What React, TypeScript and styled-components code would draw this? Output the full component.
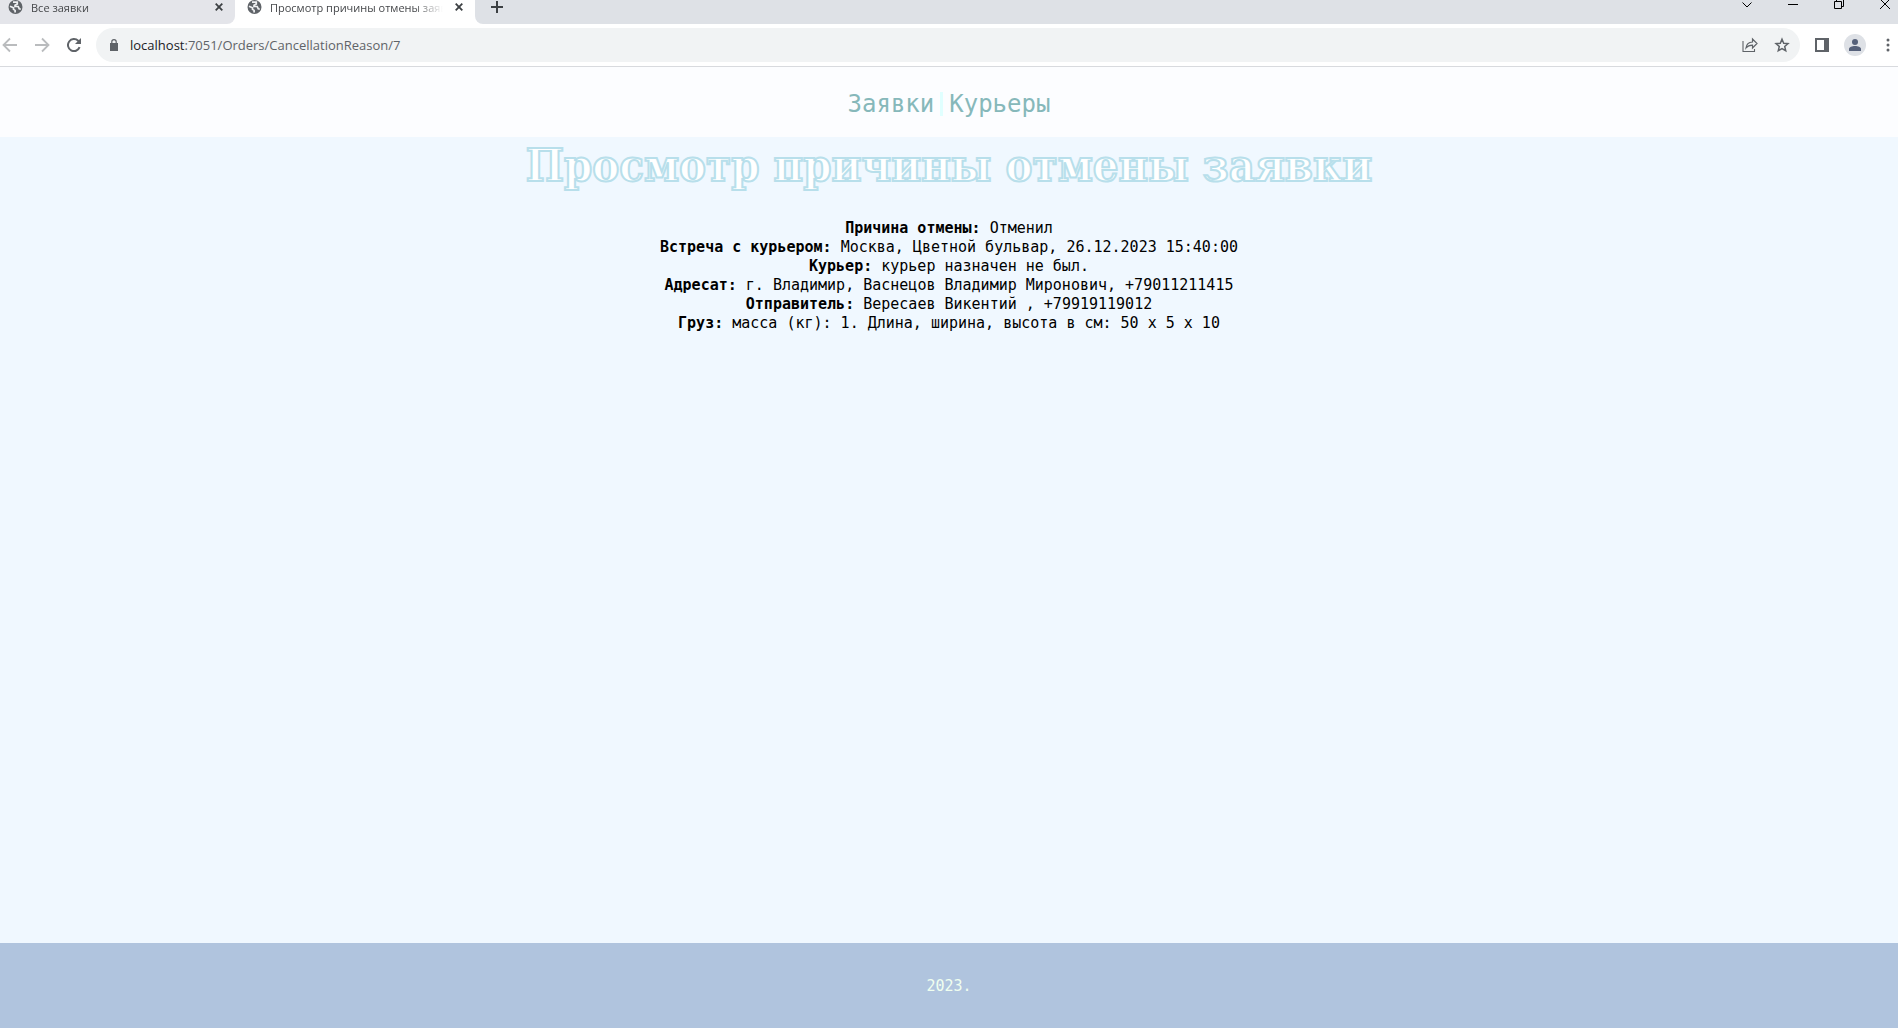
import React from "react";
import styled, { createGlobalStyle, css } from "styled-components";

const GlobalStyle = createGlobalStyle`
  *, *::before, *::after { box-sizing: border-box; }
  body {
    margin: 0;
    background: #f0f8ff;
  }
`;

const ui = `"Open Sans", "Noto Sans", sans-serif`;
const mono = `"DejaVu Sans Mono", "Liberation Mono", monospace`;

const Shell = styled.div`
  display: flex;
  flex-direction: column;
  min-height: 100vh;
`;

const resetButton = css`
  display: inline-flex;
  align-items: center;
  justify-content: center;
  flex: none;
  margin: 0;
  padding: 0;
  border: 0;
  background: none;
`;

const TabStrip = styled.div`
  display: flex;
  height: 24px;
  background: #ffffff;
`;

const Tab = styled.div<{ $active?: boolean }>`
  display: flex;
  align-items: flex-start;
  flex: none;
  width: ${(p) => (p.$active ? 240 : 235)}px;
  padding: 0 8px 0 ${(p) => (p.$active ? 12 : 8)}px;
  border-radius: 0 0 8px 0;
  background: ${(p) => (p.$active ? "#ffffff" : "#e4e5ea")};
`;

const TabTitle = styled.span`
  flex: 1;
  overflow: hidden;
  padding-left: 8px;
  color: #45474a;
  font: 11px/15px ${ui};
  white-space: nowrap;
  mask-image: linear-gradient(to right, #000 84%, transparent);
`;

const TabButton = styled.button`
  ${resetButton}
  width: 16px;
  height: 14px;
  margin-left: 8px;
  color: #3c4043;
`;

const NewTab = styled.div`
  display: flex;
  flex: 1;
  padding-left: 7px;
  border-radius: 0 0 0 8px;
  background: #dee1e6;
`;

const NewTabButton = styled.button`
  ${resetButton}
  width: 30px;
  height: 14px;
  color: #3c4043;
`;

const WindowButtons = styled.div`
  display: flex;
  margin-left: auto;
`;

const WindowButton = styled.button`
  ${resetButton}
  width: 46px;
  height: 9px;
  color: #000000;

  &:last-child {
    justify-content: flex-end;
    width: 36px;
    padding-right: 8px;
  }
`;

const Toolbar = styled.div`
  display: flex;
  align-items: center;
  height: 43px;
  border-bottom: 1px solid #d8dade;
  background: #ffffff;
`;

const NavButtons = styled.div`
  display: flex;
  gap: 12px;
  padding: 0 12px 0 0;
`;

const ToolButton = styled.button<{ $faded?: boolean }>`
  ${resetButton}
  width: 20px;
  height: 24px;
  color: ${(p) => (p.$faded ? "#babcbe" : "#5f6368")};
`;

const AddressBar = styled.form`
  display: flex;
  flex: 1;
  align-items: center;
  gap: 10px;
  height: 34px;
  padding: 0 8px 0 12px;
  border-radius: 17px;
  background: #f1f3f4;
`;

const Address = styled.a`
  flex: 1;
  color: #5f6368;
  font: 13px/20px ${ui};
  text-decoration: none;
`;

const Host = styled.span`
  color: #202124;
`;

const ToolGroup = styled.div`
  display: flex;
  align-items: center;
  gap: 12px;
  padding-left: 12px;
`;

const Profile = styled.button`
  ${resetButton}
  width: 22px;
  height: 22px;
  border-radius: 50%;
  background: #dee1e6;
  color: #56617a;
`;

const SiteHeader = styled.header`
  display: flex;
  align-items: center;
  justify-content: center;
  height: 70px;
  padding-top: 4px;
  background: #fcfdff;
`;

const SiteNav = styled.nav`
  display: flex;
  align-items: center;
`;

const NavLink = styled.a`
  padding: 0 6px;
  color: #86b8ba;
  font: 24px/24px ${mono};
  text-decoration: none;

  & + & { border-left: 3px solid #e0ffff; }
`;

const Main = styled.main`
  display: flex;
  flex: 1;
  flex-direction: column;
  align-items: center;
  text-align: center;
`;

const Title = styled.h1`
  margin: 0 0 24px;
  color: #ffffff;
  font: bold 45px/58px "DejaVu Serif Condensed", "DejaVu Serif", serif;
  -webkit-text-stroke: 2px #b8dfeb;
`;

const Details = styled.div`
  font: 15px/19px ${mono};
  color: #000000;
`;

const Line = styled.p`
  margin: 0;
`;

const Footer = styled.footer`
  display: flex;
  align-items: center;
  justify-content: center;
  height: 85px;
  padding-top: 2px;
  background: #b0c4de;
  color: #f0fff0;
  font: 15px/19px ${mono};
`;

const GlobeIcon = () => (
  <svg width="15" height="15" viewBox="0 0 15 15" aria-hidden="true">
    <circle cx="7.5" cy="7" r="7" fill="#5f6368" />
    <path
      d="M2 6.2l3.5 1.6v1.6l1.6 1v2M5 2.2h4.3v1.7L7 5.2v1.3h3.2l1 2.2 1.6.5"
      fill="none"
      stroke="#eff0f2"
      strokeWidth="1.7"
    />
  </svg>
);

const CrossIcon = () => (
  <svg width="8" height="8" viewBox="0 0 8 8" aria-hidden="true">
    <path d="M.7.7l6.6 6.6M7.3.7L.7 7.3" stroke="currentColor" strokeWidth="1.8" />
  </svg>
);

const ArrowIcon = ({ forward = false }) => (
  <svg width="16" height="16" viewBox="0 0 16 16" fill="none" aria-hidden="true">
    <path
      d={forward ? "M1 8h13M8 1.5L14.5 8 8 14.5" : "M15 8H2M8 1.5L1.5 8 8 14.5"}
      stroke="currentColor"
      strokeWidth="1.8"
    />
  </svg>
);

const details = [
  ["Причина отмены:", "Отменил"],
  ["Встреча с курьером:", "Москва, Цветной бульвар, 26.12.2023 15:40:00"],
  ["Курьер:", "курьер назначен не был."],
  ["Адресат:", "г. Владимир, Васнецов Владимир Миронович, +79011211415"],
  ["Отправитель:", "Вересаев Викентий , +79919119012"],
  ["Груз:", "масса (кг): 1. Длина, ширина, высота в см: 50 x 5 x 10"],
];

const Browser = () => (
  <>
    <TabStrip>
      <Tab>
        <GlobeIcon />
        <TabTitle>Все заявки</TabTitle>
        <TabButton type="button" aria-label="Закрыть вкладку"><CrossIcon /></TabButton>
      </Tab>
      <Tab $active>
        <GlobeIcon />
        <TabTitle>Просмотр причины отмены заявки</TabTitle>
        <TabButton type="button" aria-label="Закрыть вкладку"><CrossIcon /></TabButton>
      </Tab>
      <NewTab>
        <NewTabButton type="button" aria-label="Новая вкладка">
          <svg width="12" height="12" viewBox="0 0 12 12" aria-hidden="true">
            <path d="M6 0v12M0 6h12" stroke="currentColor" strokeWidth="2" />
          </svg>
        </NewTabButton>
        <WindowButtons>
          <WindowButton type="button" aria-label="Поиск вкладок">
            <svg width="10" height="8" viewBox="0 0 10 8" fill="none" aria-hidden="true">
              <path d="M.5 1.5L5 6l4.5-4.5" stroke="currentColor" />
            </svg>
          </WindowButton>
          <WindowButton type="button" aria-label="Свернуть">
            <svg width="10" height="1" viewBox="0 0 10 1" aria-hidden="true">
              <path d="M0 0h10v1H0z" fill="currentColor" />
            </svg>
          </WindowButton>
          <WindowButton type="button" aria-label="Восстановить">
            <svg width="10" height="9" viewBox="0 0 10 9" fill="none" aria-hidden="true">
              <path d="M.5 1.5h7v7h-7zM2.5 1.5v-2h7v7h-2" stroke="currentColor" />
            </svg>
          </WindowButton>
          <WindowButton type="button" aria-label="Закрыть">
            <svg width="10" height="9" viewBox="0 0 10 9" aria-hidden="true">
              <path d="M0-1l10 10M10-1L0 9" stroke="currentColor" />
            </svg>
          </WindowButton>
        </WindowButtons>
      </NewTab>
    </TabStrip>
    <Toolbar>
      <NavButtons>
        <ToolButton type="button" $faded aria-label="Назад"><ArrowIcon /></ToolButton>
        <ToolButton type="button" $faded aria-label="Вперёд"><ArrowIcon forward /></ToolButton>
        <ToolButton type="button" aria-label="Обновить">
          <svg width="14" height="14" viewBox="0 0 14 14" fill="none" aria-hidden="true">
            <path d="M12.6 9.2A6 6 0 1 1 11.2 2.8L12.5 4" stroke="currentColor" strokeWidth="2" />
            <path d="M14 0v6H8z" fill="currentColor" />
          </svg>
        </ToolButton>
      </NavButtons>
      <AddressBar>
        <svg width="12" height="12" viewBox="0 0 12 12" aria-hidden="true">
          <path d="M2 4h8v8H2z" fill="#5f6368" />
          <path d="M3.8 5V2.8a2.2 2.2 0 0 1 4.4 0V5" fill="none" stroke="#5f6368" strokeWidth="1.2" />
        </svg>
        <Address href="#"><Host>localhost</Host>:7051/Orders/CancellationReason/7</Address>
        <ToolGroup>
          <ToolButton type="button" aria-label="Поделиться">
            <svg width="16" height="16" viewBox="0 0 16 16" fill="none" aria-hidden="true">
              <path d="M1 4v10.5h11.5V12" stroke="currentColor" strokeWidth="1.1" />
              <path d="M4 11c.4-3.6 2.7-5.8 6.5-6V2L15 6.5 10.5 11V8.2C7.5 8.2 5.6 9 4 11z" stroke="currentColor" strokeWidth="1.2" />
            </svg>
          </ToolButton>
          <ToolButton type="button" aria-label="Добавить в закладки">
            <svg width="16" height="16" viewBox="0 0 16 16" fill="none" aria-hidden="true">
              <path d="M8 2.2l1.7 4 4.3.4-3.3 2.9 1 4.2L8 11.5l-3.7 2.2 1-4.2L2 6.6l4.3-.4z" stroke="currentColor" strokeWidth="1.5" />
            </svg>
          </ToolButton>
        </ToolGroup>
      </AddressBar>
      <ToolGroup>
        <ToolButton type="button" aria-label="Боковая панель">
          <svg width="14" height="14" viewBox="0 0 14 14" aria-hidden="true">
            <path d="M0 0h14v14H0zM2 2v10h7V2z" fill="currentColor" fillRule="evenodd" />
          </svg>
        </ToolButton>
        <Profile type="button" aria-label="Профиль">
          <svg width="12" height="12" viewBox="0 0 12 12" fill="currentColor" aria-hidden="true">
            <circle cx="6" cy="3" r="3" />
            <path d="M0 12v-2c0-2 3-3 6-3s6 1 6 3v2z" />
          </svg>
        </Profile>
        <ToolButton type="button" aria-label="Меню">
          <svg width="4" height="14" viewBox="0 0 4 14" fill="currentColor" aria-hidden="true">
            <circle cx="2" cy="2" r="1.5" />
            <circle cx="2" cy="7" r="1.5" />
            <circle cx="2" cy="12" r="1.5" />
          </svg>
        </ToolButton>
      </ToolGroup>
    </Toolbar>
  </>
);

export default function App() {
  return (
    <Shell>
      <GlobalStyle />
      <Browser />
      <SiteHeader>
        <SiteNav>
          <NavLink href="#">Заявки</NavLink>
          <NavLink href="#">Курьеры</NavLink>
        </SiteNav>
      </SiteHeader>
      <Main>
        <Title>Просмотр причины отмены заявки</Title>
        <Details>
          {details.map(([name, value]) => (
            <Line key={name}>
              <b>{name}</b> {value}
            </Line>
          ))}
        </Details>
      </Main>
      <Footer>2023.</Footer>
    </Shell>
  );
}
